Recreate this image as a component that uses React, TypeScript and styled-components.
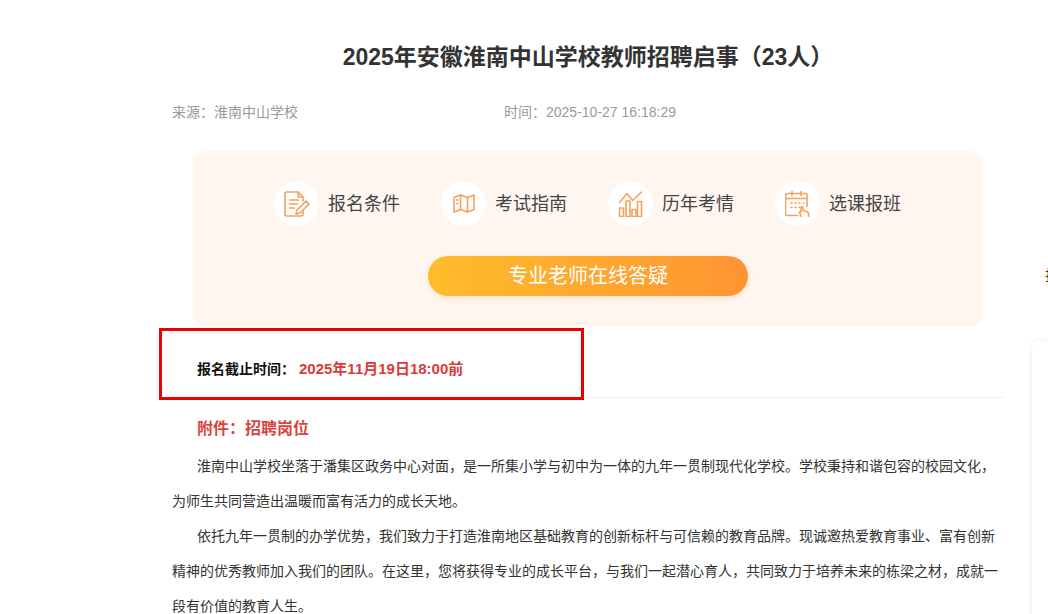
import * as React from 'react'
import styled, { createGlobalStyle } from 'styled-components'

const GlobalStyle = createGlobalStyle`
  html, body {
    margin: 0;
    padding: 0;
    background: #fff;
    overflow: hidden;
  }
  body {
    font-family: "Liberation Sans", "Noto Sans CJK SC", sans-serif;
  }
`

const Page = styled.div`
  position: relative;
  display: flex;
  width: 1048px;
  height: 614px;
  overflow: hidden;
  padding-left: 172px;
  box-sizing: border-box;
`

const Article = styled.div`
  flex-shrink: 0;
  width: 831px;
`

const Title = styled.h1`
  margin: 0 0 0 1px;
  padding-top: 41px;
  height: 32px;
  line-height: 32px;
  font-size: 23px;
  font-weight: 700;
  color: #333;
  text-align: center;
`

const Meta = styled.div`
  display: flex;
  margin-top: 29px;
  height: 20px;
  line-height: 20px;
  font-size: 14px;
  color: #999;
`

const MetaItem = styled.div`
  width: 332px;
`

const Panel = styled.div`
  margin: 29px 20px 0 21px;
  height: 175px;
  padding-top: 30px;
  box-sizing: border-box;
  background: #fff6f0;
  border-radius: 10px;
`

const LinkRow = styled.div`
  display: flex;
  gap: 29px;
  padding-left: 81px;
`

const LinkItem = styled.div`
  display: flex;
  align-items: center;
  gap: 9px;
  width: 138px;
  font-size: 18px;
  color: #444;
`

const LinkLabel = styled.span`
  padding-bottom: 3px;
`

const IconCircle = styled.div`
  display: flex;
  align-items: center;
  justify-content: center;
  width: 45px;
  height: 45px;
  border-radius: 50%;
  background: #fff;
  flex-shrink: 0;
`

const AskButton = styled.div`
  width: 320px;
  height: 40px;
  margin: 30px auto 0;
  line-height: 40px;
  text-align: center;
  border-radius: 20px;
  background: linear-gradient(90deg, #ffbc2c, #ff9432);
  box-shadow: 0 2px 6px rgba(255, 170, 80, 0.25);
  color: #fff;
  font-size: 20px;
`

const Deadline = styled.div`
  display: flex;
  gap: 4px;
  height: 72px;
  padding: 34px 0 0 25px;
  box-sizing: border-box;
  border-bottom: 1px solid #eee;
  font-size: 14px;
  line-height: 18px;
  font-weight: 700;
  color: #111;
`

const DeadlineDate = styled.span`
  font-size: 15px;
  color: #d93a3a;
`

const Attachment = styled.div`
  margin-top: 20px;
  padding-left: 25px;
  height: 22px;
  line-height: 22px;
  font-size: 16px;
  font-weight: 700;
  color: #d9443c;
`

const Paragraph = styled.p`
  margin: 0;
  font-size: 14px;
  line-height: 35px;
  color: #333;
  text-indent: 25px;
`

const Body = styled.div`
  margin-top: 9px;
`

const Side = styled.div`
  flex-shrink: 0;
  width: 300px;
  margin-left: 29px;
`

const SideLabel = styled.div`
  margin: 265px 0 0 13px;
  height: 20px;
  line-height: 20px;
  font-size: 14px;
  color: #333;
  white-space: nowrap;
`

const SideCard = styled.div`
  margin-top: 56px;
  height: 300px;
  background: #fff;
  border-radius: 8px;
  box-shadow: 0 0 6px rgba(0, 0, 0, 0.08);
`

const RedBox = styled.div`
  position: absolute;
  left: 159px;
  top: 328px;
  width: 425px;
  height: 72px;
  box-sizing: border-box;
  border: 3px solid #ea0000;
`

const IconSvg = styled.svg`
  width: 26px;
  height: 26px;
  fill: none;
  stroke: #f5a15c;
  stroke-width: 1.6;
  stroke-linecap: round;
  stroke-linejoin: round;
`

const FormIcon = () => (
  <IconSvg viewBox="0 0 26 26">
    <path d="M19 10V6l-5-5H3a2 2 0 0 0-2 2v20a2 2 0 0 0 2 2h14a2 2 0 0 0 2-2v-3" />
    <path d="M14 1v5h5" />
    <path d="M5.5 9h9M5.5 13h8M5.5 17h5" />
    <path d="M12 23l1-4 9-9 3 3-9 9z" />
  </IconSvg>
)

const MapIcon = () => (
  <IconSvg viewBox="0 0 26 26">
    <path d="M3 6.5l6.5-2.5 7 2.5 6.5-2.5v14.5l-6.5 2.5-7-2.5-6.5 2.5z" />
    <path d="M9.5 4v14.5M16.5 6.5v14.5" />
    <path d="M5.5 9h1.5M5.5 12.5h1.5" />
  </IconSvg>
)

const ChartIcon = () => (
  <IconSvg viewBox="0 0 26 26">
    <path d="M1.5 11.5l7.5-9 5.5 7 9-8.5" />
    <rect x="1.5" y="17" width="4" height="8.5" />
    <rect x="8" y="10" width="4" height="15.5" />
    <rect x="14" y="18.5" width="4" height="7" />
    <rect x="19.5" y="10.5" width="4" height="15" />
  </IconSvg>
)

const CalendarIcon = () => (
  <IconSvg viewBox="0 0 26 26">
    <path d="M13 24.5H2.5a2 2 0 0 1-2-2v-18a2 2 0 0 1 2-2h17.5a2 2 0 0 1 2 2v11" />
    <path d="M0.5 7.5h21.5M7 0.5v4M16 0.5v4" />
    <path d="M6 12h1M10 12h1M14 12h1M18 12h1M6 16.5h1M10 16.5h1M14 16.5h1" />
    <path d="M16 25.5l-1.5-4.5 1.5-.5v-4a1 1 0 0 1 2 0v3l4 1.2c1 .3 1.5 1 1.5 2v2.8" />
  </IconSvg>
)

const links = [
  { label: '报名条件', icon: <FormIcon /> },
  { label: '考试指南', icon: <MapIcon /> },
  { label: '历年考情', icon: <ChartIcon /> },
  { label: '选课报班', icon: <CalendarIcon /> },
]

export default function App() {
  return (
    <Page>
      <GlobalStyle />
      <Article>
        <Title>2025年安徽淮南中山学校教师招聘启事（23人）</Title>
        <Meta>
          <MetaItem>来源：淮南中山学校</MetaItem>
          <MetaItem>时间：2025-10-27 16:18:29</MetaItem>
        </Meta>
        <Panel>
          <LinkRow>
            {links.map(link => (
              <LinkItem key={link.label}>
                <IconCircle>{link.icon}</IconCircle>
                <LinkLabel>{link.label}</LinkLabel>
              </LinkItem>
            ))}
          </LinkRow>
          <AskButton>专业老师在线答疑</AskButton>
        </Panel>
        <Deadline>
          <span>报名截止时间：</span>
          <DeadlineDate>2025年11月19日18:00前</DeadlineDate>
        </Deadline>
        <Attachment>附件：招聘岗位</Attachment>
        <Body>
          <Paragraph>
            淮南中山学校坐落于潘集区政务中心对面，是一所集小学与初中为一体的九年一贯制现代化学校。学校秉持和谐包容的校园文化，为师生共同营造出温暖而富有活力的成长天地。
          </Paragraph>
          <Paragraph>
            依托九年一贯制的办学优势，我们致力于打造淮南地区基础教育的创新标杆与可信赖的教育品牌。现诚邀热爱教育事业、富有创新精神的优秀教师加入我们的团队。在这里，您将获得专业的成长平台，与我们一起潜心育人，共同致力于培养未来的栋梁之材，成就一段有价值的教育人生。
          </Paragraph>
        </Body>
      </Article>
      <Side>
        <SideLabel>报名</SideLabel>
        <SideCard />
      </Side>
      <RedBox />
    </Page>
  )
}
